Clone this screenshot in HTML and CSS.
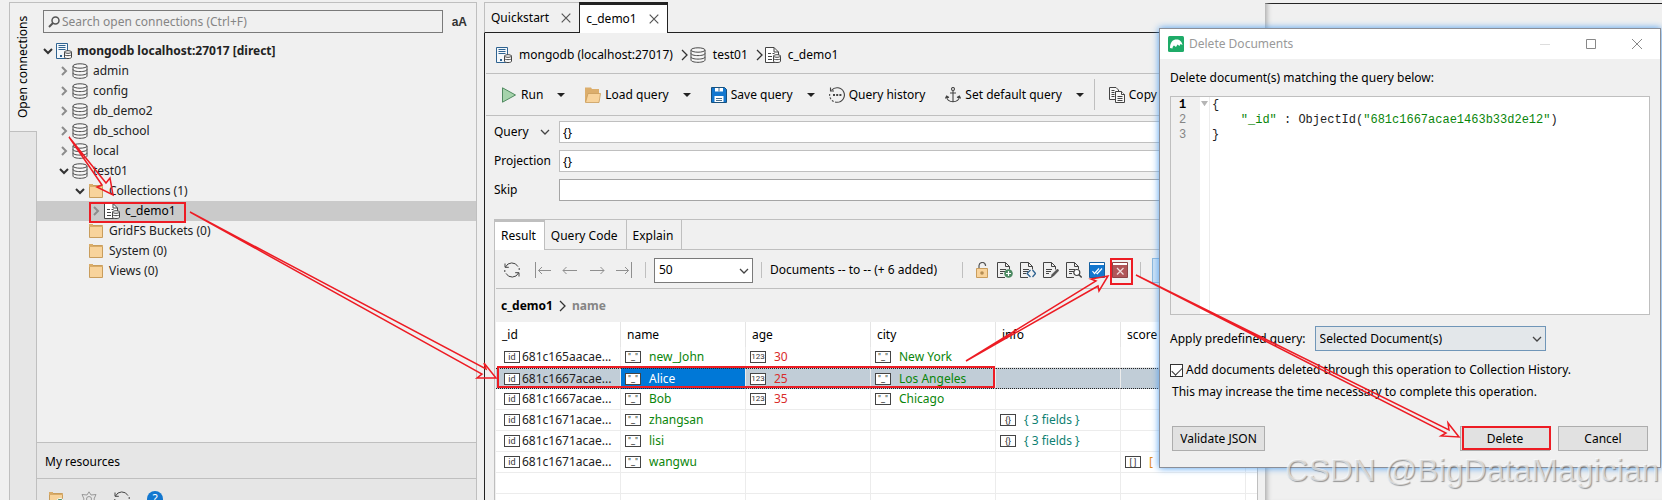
FILE: index.html
```html
<!DOCTYPE html>
<html lang="en">

<head>
    <meta charset="UTF-8">
    <title>c_demo1</title>
    <link rel="stylesheet" href="styles.css">
</head>

<body>
    <!-- icon set -->
    <svg class="sprite" aria-hidden="true">
        <symbol id="i-open" viewBox="0 0 10 10"><path d="M1 3l4 4 4-4" fill="none" stroke="#333" stroke-width="2"/></symbol>
        <symbol id="i-closed" viewBox="0 0 10 10"><path d="M3 1l4 4-4 4" fill="none" stroke="#8c8c8c" stroke-width="2"/></symbol>
        <symbol id="i-chevron" viewBox="0 0 10 10"><path d="M1 3l4 4 4-4" fill="none" stroke="#444" stroke-width="1.3"/></symbol>
        <symbol id="i-crumb" viewBox="0 0 7 12"><path d="M1 1l5 5-5 5" fill="none" stroke="#333" stroke-width="1.3"/></symbol>
        <symbol id="i-down" viewBox="0 0 8 4"><path d="M0 0h8L4 4z" fill="#222"/></symbol>
        <symbol id="i-db" viewBox="0 0 16 16"><g fill="#f6f6f6" stroke="#4a4a4a"><path d="M1 3v10c0 1.300 3 2.300 7 2.300s7-1 7-2.300V3"/><ellipse cx="8" cy="3" rx="7" ry="2.200"/><path d="M1 6.400c0 1.300 3 2.200 7 2.200s7-.9 7-2.200M1 9.900c0 1.300 3 2.200 7 2.200s7-.9 7-2.200" fill="none"/></g></symbol>
        <symbol id="i-server" viewBox="0 0 16 16"><path d="M.5.500h11v15H.5z" fill="#f4f8fb" stroke="#2f6391"/><path d="M2.500 2.500h7M2.500 4.500h7M2.500 6.500h7" stroke="#2f6391"/><path d="M4 12h2v2H4z" fill="#2f6391"/><path d="M8.500 9v5.300c0 1.600 7 1.600 7 0V9z" fill="#fff" stroke="#444"/><ellipse cx="12" cy="9" rx="3.500" ry="1.300" fill="#fff" stroke="#444"/><path d="M8.500 11.600c0 1.400 7 1.400 7 0" fill="none" stroke="#444"/></symbol>
        <symbol id="i-coll" viewBox="0 0 16 16"><path d="M.5.500H9L13.500 5v10.500H.5z" fill="#fff" stroke="#444"/><path d="M9 .5V5h4.500M3 6.500h3M3 9.500h4M3 12.500h4M7.500 6.500h2" fill="none" stroke="#444"/><path d="M8.500 9v5.300c0 1.600 7 1.600 7 0V9z" fill="#fff" stroke="#444"/><ellipse cx="12" cy="9" rx="3.500" ry="1.300" fill="#fff" stroke="#444"/><path d="M8.500 11.600c0 1.400 7 1.400 7 0" fill="none" stroke="#444"/></symbol>
        <symbol id="i-folder" viewBox="0 0 16 16"><path d="M1.500 2.500h13v12h-13z" fill="#f8d39b" stroke="#c99d5c"/><path d="M1 1h4v2h10v1H1z" fill="#d9ac69"/></symbol>
        <symbol id="i-load" viewBox="0 0 16 16"><path d="M0 .5h6l1 1.500h7V15H0z" fill="#dcae6c"/><path d="M3 6.500h12.500L14 15.500H.5z" fill="#f8d39b" stroke="#c99d5c" stroke-width=".8"/></symbol>
        <symbol id="i-run" viewBox="0 0 16 16"><path d="M1.500.800L14.500 8l-13 7.200z" fill="#a5d3ab" stroke="#518a61"/></symbol>
        <symbol id="i-save" viewBox="0 0 16 16"><path d="M.5.500h13l2 2v13H.5z" fill="#1377cf" stroke="#17517f"/><path d="M4 1h8v3.500H4zM3.500 9h9v6h-9z" fill="#fff"/><path d="M8 1v3.500M5 11.500h6M5 13.500h6" stroke="#4a6f8c"/></symbol>
        <symbol id="i-history" viewBox="0 0 16 16"><g fill="none" stroke="#444" stroke-width="1.100"><path d="M2.500 3.300A7.300 7.300 0 1 1 8 15.300"/><path d="M8 15.300A7.300 7.300 0 0 1 .7 7" stroke-dasharray="2 1.500"/><path d="M1.500.500V4H5"/></g><path d="M4 7h2v2H4zM7.200 7h2v2h-2zM10.400 7h2v2h-2z" fill="#444"/></symbol>
        <symbol id="i-anchor" viewBox="0 0 16 16"><g fill="none" stroke="#444" stroke-width="1.100"><circle cx="8" cy="2" r="1.500"/><path d="M8 3.500V15M5 6h6M1.500 9.500C2 13 5 14.700 8 14.700s6-1.700 6.500-5.200M.3 11.500l1.300-2.500L4 10.500M15.700 11.500L14.400 9 12 10.500"/></g></symbol>
        <symbol id="i-copy" viewBox="0 0 16 16"><g fill="#f8f8f8" stroke="#444"><path d="M.5.500H7L9.500 3v9.500H.5z"/><path d="M6.500 4.500h6l3 3v8h-9z"/><path d="M2.500 3.500h3M2.500 5.500h3M2.500 7.500h3M2.500 9.500h3M8.500 9.500h5M8.500 11.500h5M8.500 13.500h5M12.500 4.500v3h3"/></g></symbol>
        <symbol id="i-page" viewBox="0 0 16 16"><path d="M8 15.500H.5V.500H8.500L12.500 4.500v3" fill="none" stroke="#444"/><path d="M8.500.500v4h4M3 7.500h6M3 9.500h5M3 11.500h3" fill="none" stroke="#444"/></symbol>
        <symbol id="i-lock" viewBox="0 0 16 16"><path d="M5 6V3.500a3.300 3.300 0 0 1 6.500-.5v1" fill="none" stroke="#555" stroke-width="1.200"/><path d="M2.500 6.500h11v9h-11z" fill="#f8d39b" stroke="#c99d5c"/><circle cx="8" cy="11" r="1.800" fill="#b58d53"/></symbol>
        <symbol id="i-refresh" viewBox="0 0 16 16"><g fill="none" stroke="#444"><path d="M1.500 5A7 7 0 0 1 14 4.600M14.500 11A7 7 0 0 1 2 11.400"/><path d="M1 1.500V5.300h3.800M15 14.500v-3.800h-3.800M15.200 6v2M.8 8v2"/></g></symbol>
        <symbol id="i-left" viewBox="0 0 16 16"><path d="M1 8.500h14M4.500 5L1 8.500 4.500 12" fill="none" stroke="#8f8f8f"/></symbol>
        <symbol id="i-first" viewBox="0 0 16 16"><path d="M.5 0v16M3.500 8.500H16M7 5L3.500 8.500 7 12" fill="none" stroke="#8f8f8f"/></symbol>
        <symbol id="i-check" viewBox="0 0 16 16"><path d="M.5.500h15v15H.5z" fill="#1377cf" stroke="#17609f"/><path d="M1 1h14v2H1z" fill="#fff"/><path d="M3.500 9l2 2.500L10 6.500M7.500 11l.8.700L13 6.500" fill="none" stroke="#fff" stroke-width="1.200"/></symbol>
        <symbol id="i-delete" viewBox="0 0 16 16"><path d="M.5.500h15v15H.5z" fill="#b05558" stroke="#8d4345"/><path d="M1 1h14v2H1z" fill="#fff"/><path d="M5 6l6.500 6.500M11.500 6L5 12.500" stroke="#f0dede" stroke-width="1.200"/></symbol>
        <symbol id="i-close" viewBox="0 0 10 10"><path d="M.7.700l8.600 8.600M9.300.700L.7 9.300" stroke="#555" stroke-width="1.200"/></symbol>
    </svg>

    <div class="desktop">
        <nav class="side">
            <div class="rail"><a href="#tree">Open connections</a></div>
            <div class="panel">
                <div class="search">
                    <label class="box">
                        <svg viewBox="0 0 12 12"><circle cx="7.500" cy="4.500" r="3.500" fill="none" stroke="#555" stroke-width="1.500"/><path d="M5 7L1 11" stroke="#555" stroke-width="2"/></svg>
                        <input type="text" aria-label="Search" placeholder="Search open connections (Ctrl+F)">
                    </label>
                    <button class="case">aA</button>
                </div>
                <ul class="tree" id="tree">
                    <li class="root"><svg class="tw"><use href="#i-open"/></svg><svg class="ic"><use href="#i-server"/></svg>mongodb localhost:27017 [direct]</li>
                    <li class="l1"><svg class="tw"><use href="#i-closed"/></svg><svg class="ic"><use href="#i-db"/></svg>admin</li>
                    <li class="l1"><svg class="tw"><use href="#i-closed"/></svg><svg class="ic"><use href="#i-db"/></svg>config</li>
                    <li class="l1"><svg class="tw"><use href="#i-closed"/></svg><svg class="ic"><use href="#i-db"/></svg>db_demo2</li>
                    <li class="l1"><svg class="tw"><use href="#i-closed"/></svg><svg class="ic"><use href="#i-db"/></svg>db_school</li>
                    <li class="l1"><svg class="tw"><use href="#i-closed"/></svg><svg class="ic"><use href="#i-db"/></svg>local</li>
                    <li class="l1"><svg class="tw"><use href="#i-open"/></svg><svg class="ic"><use href="#i-db"/></svg>test01</li>
                    <li class="l2"><svg class="tw"><use href="#i-open"/></svg><svg class="ic"><use href="#i-folder"/></svg>Collections (1)</li>
                    <li class="l3 selected"><svg class="tw"><use href="#i-closed"/></svg><svg class="ic"><use href="#i-coll"/></svg>c_demo1</li>
                    <li class="l2"><svg class="tw"></svg><svg class="ic"><use href="#i-folder"/></svg>GridFS Buckets (0)</li>
                    <li class="l2"><svg class="tw"></svg><svg class="ic"><use href="#i-folder"/></svg>System (0)</li>
                    <li class="l2"><svg class="tw"></svg><svg class="ic"><use href="#i-folder"/></svg>Views (0)</li>
                </ul>
                <div class="resources">My resources</div>
                <div class="res-tools">
                    <button aria-label="Add folder"><svg class="ic" viewBox="0 0 16 16"><use href="#i-folder"/><circle cx="12" cy="12" r="4.500" fill="#4c8a62" stroke="#fff"/></svg></button>
                    <button aria-label="Favourite"><svg class="ic" viewBox="0 0 16 16"><path d="M8 .8l2 3.200 5-.5-2 4.500 2 5-4.500-.5L8 15.500 5.500 12.500 1 13l2-5L1 3.500l5 .5z" fill="none" stroke="#999"/><circle cx="8" cy="8" r="2.500" fill="none" stroke="#999"/></svg></button>
                    <button aria-label="Refresh"><svg class="ic"><use href="#i-refresh"/></svg></button>
                    <button class="help" aria-label="Help">?</button>
                </div>
            </div>
        </nav>

        <main class="main">
            <div class="tabs">
                <a href="#quickstart">Quickstart <svg><use href="#i-close"/></svg></a>
                <a href="#c_demo1" class="active">c_demo1 <svg><use href="#i-close"/></svg></a>
                <span class="fill"></span>
            </div>
            <div class="work">
                <div class="crumbs">
                    <svg class="ic"><use href="#i-server"/></svg><span>mongodb (localhost:27017)</span>
                    <svg class="cr"><use href="#i-crumb"/></svg>
                    <svg class="ic"><use href="#i-db"/></svg><span>test01</span>
                    <svg class="cr"><use href="#i-crumb"/></svg>
                    <svg class="ic"><use href="#i-coll"/></svg><span>c_demo1</span>
                </div>
                <div class="toolbar">
                    <button><svg class="ic"><use href="#i-run"/></svg>Run <svg class="dn"><use href="#i-down"/></svg></button>
                    <button><svg class="ic"><use href="#i-load"/></svg>Load query <svg class="dn"><use href="#i-down"/></svg></button>
                    <button><svg class="ic"><use href="#i-save"/></svg>Save query <svg class="dn"><use href="#i-down"/></svg></button>
                    <button class="history"><svg class="ic"><use href="#i-history"/></svg>Query history</button>
                    <button><svg class="ic"><use href="#i-anchor"/></svg>Set default query <svg class="dn"><use href="#i-down"/></svg></button>
                    <button class="copy"><svg class="ic"><use href="#i-copy"/></svg>Copy</button>
                </div>
                <form class="query">
                    <label for="q">Query <svg><use href="#i-chevron"/></svg></label><input id="q" type="text" value="{}">
                    <label for="p">Projection</label><input id="p" type="text" value="{}">
                    <label for="s">Skip</label><input id="s" class="plain" type="text">
                </form>

                <section class="result">
                    <div class="rtabs">
                        <a href="#result" class="active">Result</a>
                        <a href="#code">Query Code</a>
                        <a href="#explain">Explain</a>
                        <span class="fill"></span>
                    </div>
                    <div class="rtools">
                        <div class="pager">
                            <button aria-label="Refresh"><svg class="ic"><use href="#i-refresh"/></svg></button>
                            <button aria-label="First"><svg class="ic"><use href="#i-first"/></svg></button>
                            <button aria-label="Previous"><svg class="ic"><use href="#i-left"/></svg></button>
                            <button aria-label="Next"><svg class="ic flip"><use href="#i-left"/></svg></button>
                            <button aria-label="Last"><svg class="ic flip"><use href="#i-first"/></svg></button>
                        </div>
                        <span class="sep"></span>
                        <span class="select size">
                            <select aria-label="Page size"><option>50</option></select>
                            <svg><use href="#i-chevron"/></svg>
                        </span>
                        <span class="sep"></span>
                        <span class="count">Documents -- to -- (+ 6 added)</span>
                        <span class="sep"></span>
                        <div class="acts">
                            <button aria-label="Unlock"><svg class="ic"><use href="#i-lock"/></svg></button>
                            <button aria-label="Insert document"><svg class="ic" viewBox="0 0 16 16"><use href="#i-page"/><circle cx="11.500" cy="11.500" r="4.300" fill="#4c8a62"/><path d="M11.500 9v5M9 11.500h5" stroke="#fff" stroke-width="1.200"/></svg></button>
                            <button aria-label="View JSON"><svg class="ic" viewBox="0 0 16 16"><use href="#i-page"/><path d="M10.500 8L7 11.500l3.500 3.500M12.500 8l3 3.500-3 3.500" fill="none" stroke="#2f6391" stroke-width="1.300"/></svg></button>
                            <button aria-label="Edit"><svg class="ic" viewBox="0 0 16 16"><use href="#i-page"/><path d="M8 15.500l1-3L14.500 7l1.300 1.500-5.300 5.500z" fill="#555" stroke="#444" stroke-width=".6"/></svg></button>
                            <button aria-label="Inspect"><svg class="ic" viewBox="0 0 16 16"><use href="#i-page"/><circle cx="10.800" cy="10.500" r="3" fill="#fff" stroke="#444" stroke-width="1.200"/><path d="M13 12.700l2.700 2.800" stroke="#444" stroke-width="1.400"/></svg></button>
                            <button aria-label="Select all"><svg class="ic"><use href="#i-check"/></svg></button>
                            <button aria-label="Delete document"><svg class="ic"><use href="#i-delete"/></svg></button>
                        </div>
                        <span class="sep"></span>
                        <button class="view" aria-label="Table view"></button>
                    </div>
                    <div class="path"><b>c_demo1</b><svg class="cr"><use href="#i-crumb"/></svg><span>name</span></div>
                    <div class="scroll">
                        <table class="grid">
                            <thead>
                                <tr><th>_id</th><th>name</th><th>age</th><th>city</th><th>info</th><th>score</th><th></th></tr>
                            </thead>
                            <tbody>
                                <tr><td class="id"><i>id</i>681c165aacae...</td><td class="str"><i>"_"</i>new_John</td><td class="num"><i>123</i>30</td><td class="str"><i>"_"</i>New York</td><td></td><td></td><td></td></tr>
                                <tr class="on"><td class="id"><i>id</i>681c1667acae...</td><td class="str cur"><i>"_"</i>Alice</td><td class="num"><i>123</i>25</td><td class="str"><i>"_"</i>Los Angeles</td><td></td><td></td><td></td></tr>
                                <tr><td class="id"><i>id</i>681c1667acae...</td><td class="str"><i>"_"</i>Bob</td><td class="num"><i>123</i>35</td><td class="str"><i>"_"</i>Chicago</td><td></td><td></td><td></td></tr>
                                <tr><td class="id"><i>id</i>681c1671acae...</td><td class="str"><i>"_"</i>zhangsan</td><td></td><td></td><td class="obj"><i>{}</i>{ 3 fields }</td><td></td><td></td></tr>
                                <tr><td class="id"><i>id</i>681c1671acae...</td><td class="str"><i>"_"</i>lisi</td><td></td><td></td><td class="obj"><i>{}</i>{ 3 fields }</td><td></td><td></td></tr>
                                <tr><td class="id"><i>id</i>681c1671acae...</td><td class="str"><i>"_"</i>wangwu</td><td></td><td></td><td></td><td class="arr"><i>[ ]</i>[</td><td></td></tr>
                                <tr><td></td><td></td><td></td><td></td><td></td><td></td><td></td></tr>
                                <tr><td></td><td></td><td></td><td></td><td></td><td></td><td></td></tr>
                            </tbody>
                        </table>
                    </div>
                </section>
            </div>
        </main>

        <div class="behind"></div>
    </div>

    <div class="dialog" role="dialog" aria-labelledby="dlg-title">
        <header class="titlebar">
            <svg class="logo" viewBox="0 0 16 16"><rect width="16" height="16" rx="1.500" fill="#1eab68"/><path d="M2 12C2 6 5 3.500 8.500 3.500c3 0 5.500 2 6 5.500l-2-1-1 2-2-1.500-1.500 2.500-2-1.500c-1 .5-1.500 1.500-1.500 3z" fill="#fff"/></svg>
            <span id="dlg-title">Delete Documents</span>
            <button aria-label="Minimize"><svg viewBox="0 0 10 10"><path d="M0 5.500h10" stroke="#ddd"/></svg></button>
            <button aria-label="Maximize"><svg viewBox="0 0 10 10"><path d="M.5.500h9v9h-9z" fill="none" stroke="#888"/></svg></button>
            <button aria-label="Close"><svg viewBox="0 0 10 10"><path d="M0 0l10 10M10 0L0 10" stroke="#888"/></svg></button>
        </header>
        <div class="content">
            <p>Delete document(s) matching the query below:</p>
            <div class="editor">
                <div class="gutter"><b>1</b><span>2</span><span>3</span></div>
                <div class="fold"><svg viewBox="0 0 8 6"><path d="M0 0h8L4 6z" fill="#b5b5b5"/></svg></div>
                <div class="code">
                    <div>{</div>
                    <div class="in"><em>"_id"</em> : ObjectId(<em>"681c1667acae1463b33d2e12"</em>)</div>
                    <div>}</div>
                </div>
            </div>
            <div class="predef">
                <label for="predef">Apply predefined query:</label>
                <span class="select wide">
                    <select id="predef"><option>Selected Document(s)</option></select>
                    <svg><use href="#i-chevron"/></svg>
                </span>
            </div>
            <label class="check"><input type="checkbox" checked>Add documents deleted through this operation to Collection History.</label>
            <p class="note">This may increase the time necessary to complete this operation.</p>
            <footer class="buttons">
                <button class="first">Validate JSON</button>
                <button>Delete</button>
                <button>Cancel</button>
            </footer>
        </div>
    </div>

    <!-- red marks over the windows -->
    <svg class="marks" aria-hidden="true">
        <rect x="90" y="203" width="95" height="19"/>
        <rect x="498" y="367" width="496" height="20"/>
        <rect x="1111" y="259" width="21" height="25"/>
        <rect x="1463" y="427" width="87" height="22"/>
        <path d="M69 137L102 185 97 187 113 195 110 178 106 183z"/>
        <path d="M190 212L486 369 484 363 496 378 477 378 482 374z"/>
        <path d="M966 361L1096 281 1091 279 1108 276 1099 291 1098 286z"/>
        <path d="M1136 275L1449 430 1448 423 1459 437 1441 436 1446 433z"/>
    </svg>
    <div class="watermark">CSDN @BigDataMagician</div>
</body>

</html>
```
FILE: styles.css
```css
* {
    box-sizing: border-box;
}

body {
    margin: 0;
    height: 100vh;
    overflow: hidden;
    position: relative;
    background-color: #f0f0f0;
    color: #000;
    font: 12px/20px "Noto Sans", "Open Sans", sans-serif;
}

button,
input,
select {
    font: inherit;
    color: inherit;
}

button {
    border: 0;
    padding: 0;
    background: none;
}

a {
    color: inherit;
    text-decoration: none;
}

p {
    margin: 0;
}

svg {
    display: block;
    flex: none;
}

.sprite {
    position: absolute;
    width: 0;
    height: 0;
}

.ic {
    width: 16px;
    height: 16px;
}

.flip {
    transform: scaleX(-1);
}

.cr {
    width: 7px;
    height: 12px;
}

.desktop {
    height: 100%;
    display: grid;
    grid-template-columns: 468px minmax(0, 1fr) 397px;
    padding: 2px 0 0 9px;
}

/* connections */
.side {
    display: flex;
    min-height: 0;
    border: 1px solid #bfbfbf;
    border-bottom: 0;
}

.rail {
    width: 27px;
    flex: none;
    display: flex;
    flex-direction: column;
}

.rail a {
    height: 128px;
    padding: 0 3px;
    writing-mode: vertical-rl;
    transform: rotate(180deg);
    text-align: center;
}

.rail::after {
    content: "";
    flex: 1;
    background-color: #e6e6e6;
    border: 1px solid #bfbfbf;
    border-width: 1px 1px 0 0;
}

.panel {
    flex: 1;
    display: flex;
    flex-direction: column;
    min-width: 0;
}

.search {
    display: flex;
    padding: 7px 9px 8px 6px;
    gap: 9px;
    height: 38px;
}

.search .box {
    flex: 1;
    display: flex;
    align-items: center;
    gap: 2px;
    padding: 0 4px;
    border: 1px solid #7a7a7a;
}

.box svg {
    width: 12px;
    height: 12px;
}

.box input {
    flex: 1;
    border: 0;
    padding: 0;
    background: none;
}

.box input::placeholder {
    color: #858585;
}

.case {
    font: bold 12px "Liberation Sans", sans-serif;
    color: #333;
}

.tree {
    list-style: none;
    margin: 0;
    padding: 0;
    flex: 1;
    color: #222;
}

.tree li {
    display: flex;
    align-items: center;
    height: 20px;
}

.tree .ic {
    margin: 0 5px 0 3px;
}

.tree .tw {
    width: 10px;
    height: 10px;
}

.tree .root {
    padding-left: 6px;
    font-weight: bold;
}

.l1 {
    padding-left: 22px;
}

.l2 {
    padding-left: 38px;
}

.l3 {
    padding-left: 54px;
}

.tree .selected {
    background-color: #cacaca;
    color: #000;
}

.resources {
    height: 37px;
    padding: 9px 8px 0;
    border: 1px solid #bfbfbf;
    border-width: 1px 0;
    background-color: #e6e6e6;
}

.res-tools {
    display: flex;
    gap: 17px;
    height: 21px;
    padding: 12px 11px 0;
    overflow: hidden;
    background-color: #e6e6e6;
}

.help {
    width: 16px;
    height: 16px;
    border-radius: 50%;
    background-color: #1377cf;
    color: #fff;
    line-height: 16px;
}

/* main window */
.main {
    min-width: 0;
    min-height: 0;
    margin-left: 7px;
    display: flex;
    flex-direction: column;
}

.tabs {
    display: flex;
    height: 31px;
    flex: none;
}

.tabs a {
    display: flex;
    align-items: center;
    gap: 12px;
    padding: 1px 8px 0 6px;
    border: 1px solid #bfbfbf;
    border-width: 1px 0 0 1px;
    border-bottom: 1px solid #222;
}

.tabs a svg {
    width: 10px;
    height: 10px;
}

.tabs .active {
    background-color: #fff;
    border: 1px solid #222;
    border-width: 3px 1px 0;
    padding-top: 0;
}

.tabs .fill {
    flex: 1;
    border-bottom: 1px solid #222;
}

.work {
    flex: 1;
    min-height: 0;
    border-left: 1px solid #222;
    padding-left: 1px;
    display: flex;
    flex-direction: column;
}

.crumbs {
    display: flex;
    align-items: center;
    gap: 2px;
    height: 41px;
    flex: none;
    padding: 3px 0 0 10px;
    border-bottom: 1px solid #bfbfbf;
}

.crumbs span {
    margin: 0 6px 0 5px;
}

.toolbar {
    display: flex;
    align-items: center;
    height: 42px;
    flex: none;
    gap: 20px;
    padding: 0 0 0 15px;
    border-bottom: 1px solid #bfbfbf;
    overflow: hidden;
}

.toolbar button {
    display: flex;
    align-items: center;
    gap: 4px;
    white-space: nowrap;
}

.toolbar .dn {
    width: 8px;
    height: 4px;
    margin-left: 10px;
}

.toolbar .history {
    margin-left: -6px;
}

.toolbar .copy {
    height: 31px;
    border-left: 1px solid #bfbfbf;
    padding-left: 14px;
    margin-left: -10px;
}

.query {
    display: grid;
    grid-template-columns: 57px 1fr;
    column-gap: 8px;
    row-gap: 7px;
    padding: 5px 8px 18px;
}

.query label {
    display: flex;
    align-items: center;
    gap: 11px;
}

.query label svg {
    width: 10px;
    height: 10px;
}

.query input {
    min-width: 0;
    height: 22px;
    padding: 0 3px;
    border: 1px solid #bfbfbf;
    background-color: #fff;
}

.query .plain {
    border-color: #a5a5a5;
}

/* result pane */
.result {
    flex: 1;
    min-height: 0;
    margin: 0 7px 0 8px;
    border-left: 1px solid #bfbfbf;
    border-right: 1px solid #bfbfbf;
    display: flex;
    flex-direction: column;
}

.rtabs {
    display: flex;
    height: 31px;
    flex: none;
    border-top: 1px solid #bfbfbf;
}

.rtabs a,
.rtabs .fill {
    padding: 6px 8px 0 6px;
    border-right: 1px solid #bfbfbf;
    border-bottom: 1px solid #bfbfbf;
}

.rtabs .fill {
    flex: 1;
}

.rtabs .active {
    padding-top: 4px;
    border-top: 2px solid #bfbfbf;
    border-bottom: 0;
    background-color: #fff;
}

.rtools {
    display: flex;
    align-items: center;
    gap: 8px;
    height: 39px;
    flex: none;
    margin: 0 0 0 1px;
    padding: 2px 0 0 8px;
    border-bottom: 1px solid #bfbfbf;
    white-space: nowrap;
}

.pager {
    display: flex;
    gap: 11px;
    margin-right: 5px;
}

.pager button:first-child {
    margin-right: 4px;
}

.sep {
    width: 1px;
    height: 16px;
    background-color: #bfbfbf;
}

.select {
    position: relative;
    display: block;
    height: 25px;
}

.select select {
    appearance: none;
    width: 100%;
    height: 100%;
    padding: 0 4px;
    border: 1px solid #7a7a7a;
    border-radius: 0;
    background-color: #fff;
}

.select svg {
    position: absolute;
    right: 4px;
    top: 8px;
    width: 10px;
    height: 10px;
    pointer-events: none;
}

.size {
    width: 99px;
}

.count {
    min-width: 184px;
}

.acts {
    display: flex;
    gap: 7px;
    margin: 0 4px 0 3px;
}

.view {
    width: 24px;
    height: 25px;
    margin-left: 3px;
    border: 1px solid #8db8dc;
    background-color: #cfe3f4;
}

.path {
    display: flex;
    align-items: center;
    gap: 6px;
    height: 33px;
    flex: none;
    padding-left: 6px;
}

.path span {
    font-weight: bold;
    color: #858585;
}

.scroll {
    flex: 1;
    overflow: hidden;
    margin-left: 1px;
    background-color: #fff;
}

.grid {
    width: 100%;
    table-layout: fixed;
    border-collapse: separate;
    border-spacing: 0;
}

.grid th {
    width: 125px;
    height: 25px;
    padding: 0 6px;
    font-weight: normal;
    text-align: left;
    border-right: 1px solid #e5e5e5;
}

.grid th:last-child {
    width: auto;
}

.grid td {
    height: 21px;
    padding: 0 4px;
    line-height: 20px;
    white-space: nowrap;
    border: 1px solid #ececec;
    border-width: 0 1px 1px 0;
}

.grid th:last-child,
.grid td:last-child {
    border-right: 0;
}

.grid i {
    display: inline-block;
    width: 16px;
    height: 12px;
    margin: -2px 8px 0 0;
    border: 1px solid #444;
    background-color: #fff;
    color: #333;
    font: 9px/10px Roboto, sans-serif;
    text-align: center;
    vertical-align: middle;
}

.grid .num i {
    font-size: 8px;
}

.grid .id {
    padding-left: 8px;
    color: #222;
}

.grid .id i {
    margin-right: 2px;
}

.str {
    color: #0a850a;
}

.num {
    color: #d92b2b;
}

.obj {
    color: #0d7f72;
}

.arr {
    color: #e08b1e;
}

.grid .on td {
    background-color: #c1cdd7;
    border-top: 1px dotted #222;
    border-bottom: 1px dotted #222;
    line-height: 19px;
}

.grid .on .cur {
    background-color: #0078d7;
    color: #fff;
}

.behind {
    margin-top: -2px;
    border-top: 3px solid #f0f0f0;
    background: linear-gradient(#222, #222) 0 0 / 100% 1px no-repeat #f0f0f0;
    box-shadow: inset 6px 0 5px -4px #aaa;
}

/* delete dialog */
.dialog {
    position: absolute;
    top: 28px;
    right: 1px;
    width: 502px;
    border: 1px solid #8b8f98;
    background-color: #f0f0f0;
    box-shadow: 0 0 7px #4a9cf0;
}

.titlebar {
    display: flex;
    align-items: center;
    height: 30px;
    padding: 0 18px 0 8px;
    background-color: #fff;
    color: #999;
}

.titlebar span {
    flex: 1;
    margin-left: 5px;
}

.titlebar button {
    margin-left: 36px;
}

.titlebar button svg {
    width: 10px;
    height: 10px;
}

.logo {
    width: 16px;
    height: 16px;
}

.content {
    padding: 9px 10px 16px;
}

.editor {
    display: flex;
    height: 219px;
    margin-top: 8px;
    border: 1px solid #bfbfbf;
    background-color: #fff;
    font: 12px/15px "Liberation Mono", monospace;
}

.gutter {
    width: 29px;
    padding: 1px 0 0 8px;
    background-color: #f0f0f0;
    color: #858585;
}

.gutter b {
    color: #000;
}

.gutter b,
.gutter span {
    display: block;
}

.fold {
    width: 10px;
    padding: 4px 1px;
    border-right: 1px solid #ececec;
}

.code {
    padding: 1px 0 0 2px;
    color: #222;
}

.code .in {
    padding-left: 4ch;
}

.code em {
    font-style: normal;
    color: #0a850a;
}

.predef {
    display: flex;
    align-items: center;
    gap: 9px;
    margin-top: 11px;
}

.predef .select {
    width: 231px;
}

.predef select {
    border-color: #7096b8;
    background-color: #e3e7ea;
}

.check {
    display: flex;
    align-items: center;
    gap: 3px;
    margin-top: 9px;
}

.check input {
    appearance: none;
    width: 13px;
    height: 13px;
    margin: 0;
    border: 1px solid #333;
    background-color: #fff;
}

.check input:checked::before {
    content: "";
    display: block;
    width: 9px;
    height: 5px;
    margin: 2px 1px;
    border: 1px solid #333;
    border-width: 0 0 1px 1px;
    transform: rotate(-45deg);
}

.note {
    margin: 2px 2px 0;
}

.buttons {
    display: flex;
    gap: 8px;
    margin: 24px 2px 0;
}

.buttons button {
    width: 90px;
    height: 25px;
    border: 1px solid #adadad;
    background-color: #e1e1e1;
}

.buttons .first {
    width: 93px;
    margin-right: auto;
}

.marks {
    position: absolute;
    top: 0;
    left: 0;
    width: 100%;
    height: 100%;
    fill: none;
    stroke: #ed1c24;
    stroke-width: 2;
    pointer-events: none;
}

.marks path {
    stroke-width: 1.5;
}

.watermark {
    position: absolute;
    right: 3px;
    bottom: 12px;
    font: 32px/36px "Liberation Sans", sans-serif;
    color: rgba(255, 255, 255, 0.6);
    text-shadow: 1px 1px 1px rgba(90, 90, 90, 0.6);
}
```
